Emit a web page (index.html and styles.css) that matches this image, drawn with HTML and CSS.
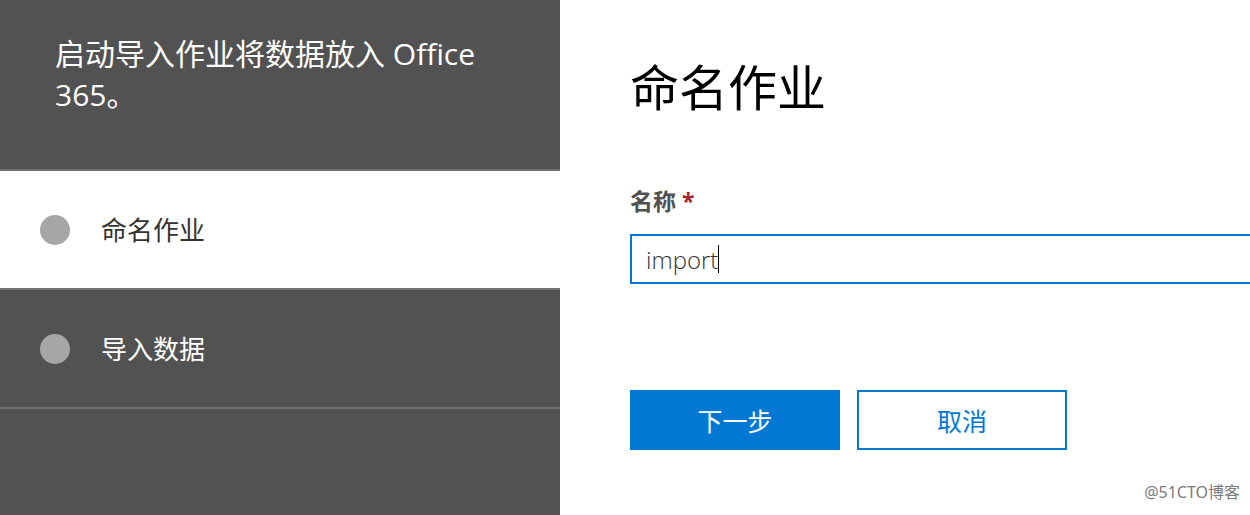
FILE: index.html
```html
<!DOCTYPE html>
<html lang="zh-CN">
<head>
<meta charset="utf-8">
<link rel="stylesheet" href="styles.css">
</head>
<body>
<div class="page">
  <aside class="side">
    <div class="side-head">启动导入作业将数据放入 Office 365。</div>
    <div class="step step-active"><span class="dot"></span><span class="step-label">命名作业</span></div>
    <div class="step"><span class="dot"></span><span class="step-label">导入数据</span></div>
    <div class="side-rest"></div>
  </aside>
  <main class="main">
    <h1 class="title">命名作业</h1>
    <label class="field-label">名称 <span class="req">*</span></label>
    <div class="input"><span class="input-text">import</span><span class="caret"></span></div>
    <div class="actions">
      <button class="btn btn-primary">下一步</button>
      <button class="btn btn-secondary">取消</button>
    </div>
    <div class="watermark">@51CTO博客</div>
  </main>
</div>
</body>
</html>
```

FILE: styles.css
```css
* { box-sizing: border-box; }
html, body { margin: 0; padding: 0; }
body {
  width: 1250px;
  height: 515px;
  overflow: hidden;
  background: #fff;
  font-family: "Noto Sans", "Noto Sans CJK SC", sans-serif;
}
.page {
  display: flex;
  height: 515px;
}
.side {
  width: 560px;
  flex: none;
  background: #525252;
  display: flex;
  flex-direction: column;
}
.side-head {
  height: 171px;
  padding: 33px 55px 0 55px;
  color: #fff;
  font-size: 30px;
  line-height: 41px;
  border-bottom: 2px solid #727272;
}
.side-head { font-family: "Open Sans", "Noto Sans CJK SC", sans-serif; font-weight: 400; }
.step {
  height: 119px;
  display: flex;
  align-items: center;
  padding-left: 40px;
  color: #fff;
  font-size: 26px;
  border-bottom: 2px solid #727272;
}
.step-active {
  background: #fff;
  color: #333;
}
.dot {
  width: 30px;
  height: 30px;
  border-radius: 50%;
  background: #a6a6a6;
  flex: none;
}
.step-label {
  margin-left: 31px;
  margin-top: -2px;
}
.side-rest { flex: 1; }

.main {
  flex: 1;
  min-width: 0;
  overflow: hidden;
  position: relative;
  padding-left: 70px;
  display: flex;
  flex-direction: column;
}
.title {
  margin: 55px 0 0 0;
  font-size: 49px;
  font-weight: 400;
  line-height: 64px;
  color: #000;
}
.field-label {
  margin-top: 67px;
  font-size: 23px;
  font-weight: 700;
  color: #505050;
  line-height: 30px;
}
.req { color: #a4262c; }
.input {
  margin-top: 18px;
  width: 700px;
  flex: none;
  height: 50px;
  border: 2px solid #0078d4;
  display: flex;
  align-items: center;
  padding-left: 14px;
  font-size: 24px;
  color: #333;
}
.input-text { font-family: "Open Sans", "Noto Sans", sans-serif; font-weight: 300; }
.caret {
  width: 1px;
  height: 28px;
  background: #000;
}
.actions {
  margin-top: 106px;
  display: flex;
  gap: 17px;
}
.btn {
  width: 210px;
  height: 60px;
  font-family: inherit;
  font-size: 25px;
  border: 2px solid #0078d4;
  padding: 0;
}
.btn-primary { background: #0078d4; color: #fff; }
.btn-secondary { background: #fff; color: #0078d4; }
.watermark {
  position: absolute;
  right: 10px;
  bottom: 12px;
  font-size: 16px;
  color: #7a7a7a;
}
```
